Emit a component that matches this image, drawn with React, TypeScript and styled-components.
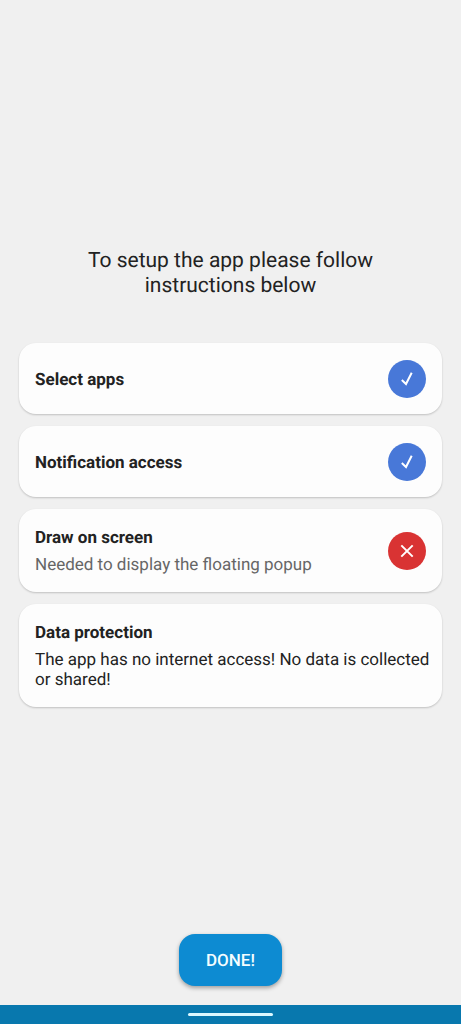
import React from "react";
import styled, { createGlobalStyle, css } from "styled-components";

const GlobalStyle = createGlobalStyle`
  *, *::before, *::after { box-sizing: border-box; }
  body {
    margin: 0;
    background: #f0f0f0;
    color: #222;
    font-family: Roboto, "Liberation Sans", sans-serif;
    text-rendering: geometricPrecision;
  }
  button { text-rendering: inherit; }
`;

const Screen = styled.div`
  display: flex;
  flex-direction: column;
  min-height: 100vh;
`;

const Content = styled.main`
  flex: 1;
  display: flex;
  flex-direction: column;
  justify-content: center;
  padding: 22px 19px 0;
`;

const Heading = styled.h1`
  margin: 0 auto 44px;
  max-width: 320px;
  font-size: 21px;
  line-height: 25px;
  font-weight: 400;
  text-align: center;
`;

const CardList = styled.div`
  display: flex;
  flex-direction: column;
  gap: 12px;
`;

const cardStyle = css`
  display: flex;
  align-items: center;
  justify-content: space-between;
  gap: 16px;
  width: 100%;
  min-height: 71px;
  padding: 16px;
  border: 0;
  border-radius: 17px;
  background: #fdfdfd;
  box-shadow: 0 1px 2px rgba(0, 0, 0, 0.2);
  color: inherit;
  font: inherit;
  text-align: left;
`;

const ActionCard = styled.button`
  ${cardStyle}
  cursor: pointer;
`;

const InfoCard = styled.section`
  ${cardStyle}
  padding-right: 8px;
`;

const CardText = styled.span`
  display: flex;
  flex-direction: column;
  gap: 7px;
  padding: 3px 0 1px;
`;

const CardTitle = styled.strong`
  font-size: 17px;
  line-height: 20px;
  font-weight: 700;
`;

const CardDetail = styled.span<{ $muted?: boolean }>`
  font-size: 17px;
  line-height: 20px;
  color: ${(p) => (p.$muted ? "#666" : "#222")};
`;

const StatusCircle = styled.span<{ $done: boolean }>`
  flex: none;
  display: flex;
  align-items: center;
  justify-content: center;
  width: 38px;
  height: 38px;
  border-radius: 50%;
  background: ${(p) => (p.$done ? "#4878d8" : "#d93333")};
`;

const Footer = styled.footer`
  display: flex;
  justify-content: center;
  padding-bottom: 19px;
`;

const DoneButton = styled.button`
  min-width: 103px;
  height: 52px;
  padding: 2px 24px 0;
  border: 0;
  border-radius: 16px;
  background: #0d8bd2;
  box-shadow: 0 2px 4px rgba(0, 0, 0, 0.35);
  color: #f4fdff;
  font: 500 17px/20px Roboto, "Liberation Sans", sans-serif;
  cursor: pointer;
`;

const NavigationBar = styled.div`
  display: flex;
  align-items: center;
  justify-content: center;
  height: 19px;
  background: #0878ae;
`;

const HomeIndicator = styled.span`
  width: 85px;
  height: 3px;
  border-radius: 2px;
  background: #dcf8ff;
`;

function Status({ done }: { done: boolean }) {
  return (
    <StatusCircle $done={done}>
      <svg
        width="38"
        height="38"
        viewBox="0 0 38 38"
        fill="none"
        stroke="#fff"
        strokeWidth="2"
        role="img"
        aria-label={done ? "Done" : "Missing"}
      >
        {done ? (
          <path d="M13.8 20.1 18 24 23.7 12.8" />
        ) : (
          <path d="M13.3 13.4 24.7 24.6M24.7 13.4 13.3 24.6" />
        )}
      </svg>
    </StatusCircle>
  );
}

const steps = [
  { title: "Select apps", done: true },
  { title: "Notification access", done: true },
  {
    title: "Draw on screen",
    detail: "Needed to display the floating popup",
    done: false,
  },
];

export default function App() {
  return (
    <>
      <GlobalStyle />
      <Screen>
        <Content>
          <Heading>To setup the app please follow instructions below</Heading>
          <CardList>
            {steps.map((step) => (
              <ActionCard key={step.title} type="button">
                <CardText>
                  <CardTitle>{step.title}</CardTitle>
                  {step.detail && <CardDetail $muted>{step.detail}</CardDetail>}
                </CardText>
                <Status done={step.done} />
              </ActionCard>
            ))}
            <InfoCard>
              <CardText>
                <CardTitle>Data protection</CardTitle>
                <CardDetail>
                  The app has no internet access! No data is collected or shared!
                </CardDetail>
              </CardText>
            </InfoCard>
          </CardList>
        </Content>
        <Footer>
          <DoneButton type="button">DONE!</DoneButton>
        </Footer>
        <NavigationBar>
          <HomeIndicator />
        </NavigationBar>
      </Screen>
    </>
  );
}
